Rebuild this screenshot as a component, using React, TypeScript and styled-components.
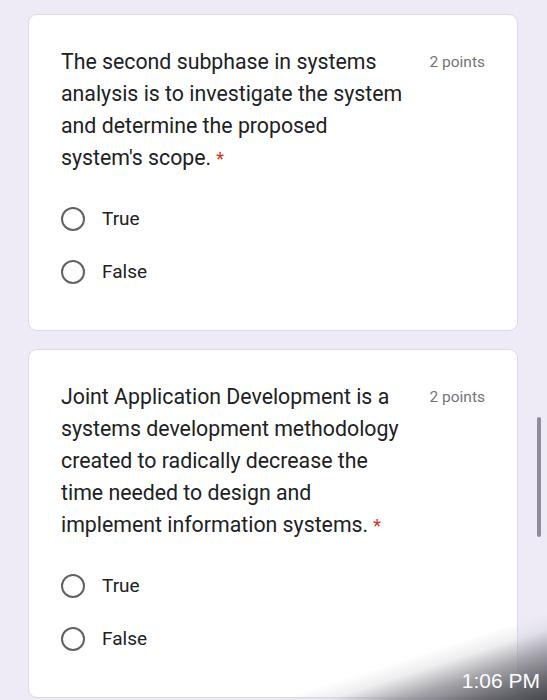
import React from "react";
import styled, { createGlobalStyle } from "styled-components";

const Global = createGlobalStyle`
  html, body { margin: 0; padding: 0; background: #eeebf7; }
  body { font-family: Roboto, "Liberation Sans", Arial, sans-serif; }
`;

const Page = styled.div`
  position: relative;
  width: 547px;
  height: 700px;
  overflow: hidden;
  background: #eeebf7;
  padding: 14px 0 0 28px;
  box-sizing: border-box;
  display: flex;
  flex-direction: column;
  gap: 18px;
`;

const Card = styled.div`
  width: 490px;
  box-sizing: border-box;
  background: #ffffff;
  border: 1px solid #dcdae3;
  border-radius: 9px;
  padding: 31px 32px 32px 32px;
  flex-shrink: 0;
`;

const Header = styled.div`
  display: flex;
  justify-content: space-between;
  align-items: flex-start;
`;

const Question = styled.div`
  font-size: 21.3px;
  line-height: 32px;
  color: #202124;
`;

const Star = styled.span`
  color: #d93025;
  margin-left: 5px;
  font-size: 18px;
`;

const Points = styled.div`
  font-size: 15.5px;
  line-height: 32px;
  color: #70757a;
  white-space: nowrap;
`;

const Options = styled.div`
  margin-top: 17px;
  display: flex;
  flex-direction: column;
`;

const Option = styled.label`
  height: 53px;
  display: flex;
  align-items: center;
  gap: 17px;
`;

const Radio = styled.span`
  width: 20px;
  height: 20px;
  border: 2.5px solid #5f6368;
  border-radius: 50%;
  flex-shrink: 0;
`;

const OptionText = styled.span`
  font-size: 19px;
  color: #202124;
`;

const ScrollThumb = styled.div`
  position: absolute;
  left: 537px;
  top: 417px;
  width: 4px;
  height: 120px;
  border-radius: 2px;
  background: #8f8c9b;
`;

const Shade = styled.div`
  position: absolute;
  right: 0;
  bottom: 0;
  width: 297px;
  height: 140px;
  background: linear-gradient(
    162deg,
    rgba(255, 255, 255, 0) 63%,
    rgba(205, 205, 210, 0.35) 70%,
    rgba(135, 135, 142, 0.75) 80%,
    rgba(95, 95, 102, 0.9) 90%,
    rgba(65, 65, 72, 0.97) 100%
  );
  pointer-events: none;
`;

const Time = styled.div`
  position: absolute;
  right: 7px;
  bottom: 7px;
  font-size: 21px;
  color: #ffffff;
  font-family: "Liberation Sans", Arial, sans-serif;
`;

type Q = { lines: string[] };

const questions: Q[] = [
  {
    lines: [
      "The second subphase in systems",
      "analysis is to investigate the system",
      "and determine the proposed",
      "system's scope.",
    ],
  },
  {
    lines: [
      "Joint Application Development is a",
      "systems development methodology",
      "created to radically decrease the",
      "time needed to design and",
      "implement information systems.",
    ],
  },
];

export default function App() {
  return (
    <>
      <Global />
      <Page>
        {questions.map((q, i) => (
          <Card key={i}>
            <Header>
              <Question>
                {q.lines.map((l, j) => (
                  <React.Fragment key={j}>
                    {l}
                    {j === q.lines.length - 1 ? <Star>*</Star> : <br />}
                  </React.Fragment>
                ))}
              </Question>
              <Points>2 points</Points>
            </Header>
            <Options>
              {["True", "False"].map((o) => (
                <Option key={o}>
                  <Radio />
                  <OptionText>{o}</OptionText>
                </Option>
              ))}
            </Options>
          </Card>
        ))}
        <ScrollThumb />
        <Shade />
        <Time>1:06 PM</Time>
      </Page>
    </>
  );
}
